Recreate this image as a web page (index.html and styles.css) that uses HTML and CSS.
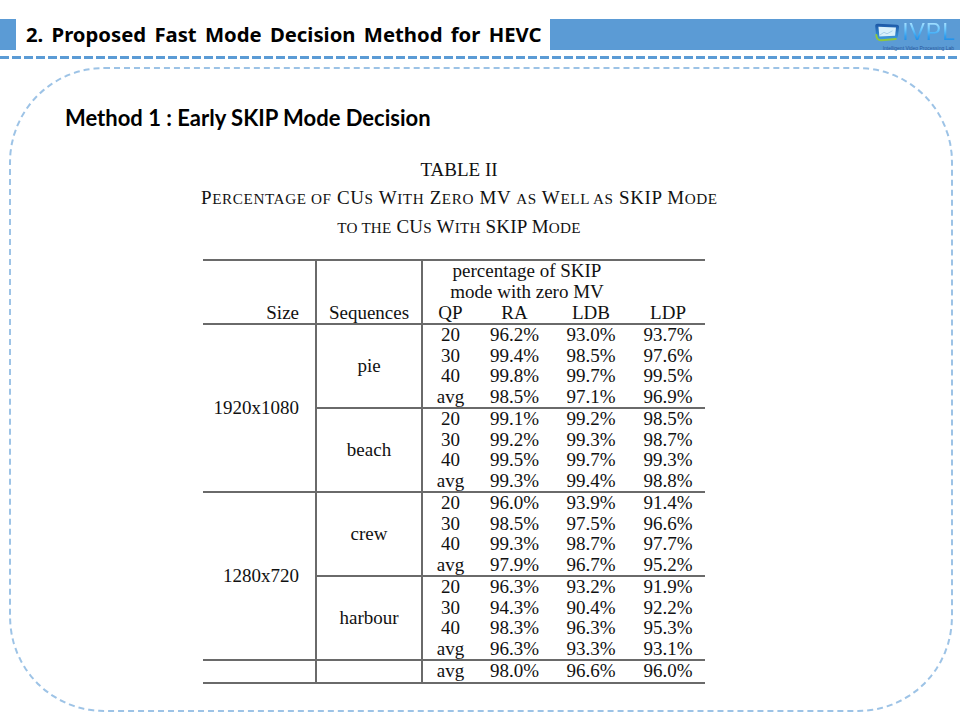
FILE: index.html
```html
<!DOCTYPE html>
<html lang="en">
<head>
<meta charset="utf-8">
<title>Proposed Fast Mode Decision Method for HEVC</title>
<link rel="stylesheet" href="styles.css">
</head>
<body>
<header class="header">
  <div class="hdr-block"></div>
  <h1 class="hdr-title">2. Proposed Fast Mode Decision Method for HEVC</h1>
  <div class="hdr-bar">
    <div class="logo">
      <div class="logo-top">
        <svg class="logo-icon" width="26" height="19" viewBox="0 0 26 19">
          <defs>
            <linearGradient id="scr" x1="0" y1="0" x2="0" y2="1">
              <stop offset="0" stop-color="#1b56a5"/>
              <stop offset="1" stop-color="#3d9be0"/>
            </linearGradient>
          </defs>
          <path d="M1.2 3.2 Q1.2 0.8 3.8 0.8 L22.8 1.8 Q25.3 2 25 4.4 L23.9 13.4 Q23.6 15.8 21 15.8 L5 16.5 Q2.5 16.7 2.3 14.2 Z" fill="url(#scr)"/>
          <path d="M4.4 3.8 L22 4.6 L21.1 12.8 L5.4 13.5 Z" fill="#d9f0fb"/>
          <path d="M6 12 L10 9.3 L13 10.8 L18.5 7.8" stroke="#9cc7e6" stroke-width="0.8" fill="none"/>
          <path d="M2.3 12 Q2.7 17.6 7.5 17.2 L21.8 15.9" stroke="#8dc63f" stroke-width="2" fill="none" stroke-linecap="round"/>
        </svg>
        <span class="logo-text">IVPL</span>
      </div>
      <div class="logo-sub">Intelligent Video Processing Lab</div>
    </div>
  </div>
</header>
<div class="rule"></div>
<main class="frame">
  <h2 class="method">Method 1 : Early SKIP Mode Decision</h2>
  <section class="paper">
    <div class="caption">
      <div class="cap-title">TABLE II</div>
      <div class="cap-line wide">P<span class="sc">ercentage of</span> CU<span class="sc">s</span> W<span class="sc">ith</span> Z<span class="sc">ero</span> MV <span class="sc">as</span> W<span class="sc">ell as</span> SKIP M<span class="sc">ode</span></div>
      <div class="cap-line"><span class="sc">to the</span> CU<span class="sc">s</span> W<span class="sc">ith</span> SKIP M<span class="sc">ode</span></div>
    </div>
    <table class="tbl">
      <colgroup>
        <col class="c-size"><col class="c-seq"><col class="c-qp"><col class="c-ra"><col class="c-ldb"><col class="c-ldp">
      </colgroup>
      <thead>
        <tr>
          <th class="size" rowspan="2">Size</th>
          <th class="seq" rowspan="2">Sequences</th>
          <th class="pct" colspan="3">percentage of SKIP<br>mode with zero MV</th>
          <th></th>
        </tr>
        <tr><th>QP</th><th>RA</th><th>LDB</th><th>LDP</th></tr>
      </thead>
      <tbody>
        <tr class="grp"><td class="size" rowspan="8">1920x1080</td><td class="seq" rowspan="4">pie</td><td>20</td><td>96.2%</td><td>93.0%</td><td>93.7%</td></tr>
        <tr><td>30</td><td>99.4%</td><td>98.5%</td><td>97.6%</td></tr>
        <tr><td>40</td><td>99.8%</td><td>99.7%</td><td>99.5%</td></tr>
        <tr><td>avg</td><td>98.5%</td><td>97.1%</td><td>96.9%</td></tr>
        <tr class="grp"><td class="seq" rowspan="4">beach</td><td>20</td><td>99.1%</td><td>99.2%</td><td>98.5%</td></tr>
        <tr><td>30</td><td>99.2%</td><td>99.3%</td><td>98.7%</td></tr>
        <tr><td>40</td><td>99.5%</td><td>99.7%</td><td>99.3%</td></tr>
        <tr><td>avg</td><td>99.3%</td><td>99.4%</td><td>98.8%</td></tr>
        <tr class="grp"><td class="size" rowspan="8">1280x720</td><td class="seq" rowspan="4">crew</td><td>20</td><td>96.0%</td><td>93.9%</td><td>91.4%</td></tr>
        <tr><td>30</td><td>98.5%</td><td>97.5%</td><td>96.6%</td></tr>
        <tr><td>40</td><td>99.3%</td><td>98.7%</td><td>97.7%</td></tr>
        <tr><td>avg</td><td>97.9%</td><td>96.7%</td><td>95.2%</td></tr>
        <tr class="grp"><td class="seq" rowspan="4">harbour</td><td>20</td><td>96.3%</td><td>93.2%</td><td>91.9%</td></tr>
        <tr><td>30</td><td>94.3%</td><td>90.4%</td><td>92.2%</td></tr>
        <tr><td>40</td><td>98.3%</td><td>96.3%</td><td>95.3%</td></tr>
        <tr><td>avg</td><td>96.3%</td><td>93.3%</td><td>93.1%</td></tr>
        <tr class="grp"><td class="size"></td><td class="seq"></td><td>avg</td><td>98.0%</td><td>96.6%</td><td>96.0%</td></tr>
      </tbody>
    </table>
  </section>
</main>
</body>
</html>
```

FILE: styles.css
```css
* { box-sizing: border-box; margin: 0; padding: 0; }
html, body { width: 960px; height: 720px; background: #fff; overflow: hidden; }
body { font-family: "Liberation Serif", serif; color: #000; }

.header { display: flex; align-items: center; height: 31px; margin-top: 19px; }
.hdr-block { flex: none; width: 16px; height: 31px; background: #5b9bd5; }
.hdr-title {
  flex: none; margin-left: 10px;
  font-family: "Noto Sans", sans-serif; font-weight: 700; font-size: 20.3px;
  line-height: 31px; word-spacing: 3px; white-space: nowrap; color: #000;
}
.hdr-bar {
  flex: 1; height: 31px; margin-left: 8px; background: #5b9bd5;
  display: flex; justify-content: flex-end; align-items: flex-start; padding-right: 4px;
}
.logo { display: flex; flex-direction: column; align-items: flex-end; padding-top: 4px; }
.logo-top { display: flex; align-items: flex-end; gap: 2px; height: 19px; }
.logo-icon { display: block; }
.logo-text {
  display: block;
  font-family: "Liberation Sans", sans-serif; font-size: 23px; line-height: 25px;
  margin: -3px 0 -3px; letter-spacing: 1px;
  background: linear-gradient(180deg, #bfeaff 0%, #6fcaff 35%, #2f9ff0 65%, #1b7dd8 100%);
  -webkit-background-clip: text; background-clip: text; color: transparent;
}
.logo-sub {
  font-family: "Liberation Sans", sans-serif; font-size: 5px; line-height: 5px;
  color: #2a5a9e; margin-top: 3.5px; margin-right: 2px; white-space: nowrap;
}

.rule {
  height: 3px; margin-top: 6px;
  background: repeating-linear-gradient(90deg, #5b9bd5 0 9px, transparent 9px 12px);
}

.frame {
  display: block; margin: 8px 7px 0 9px; height: 645px;
  border: 2px dashed #9dc3e6; border-radius: 95px;
  padding: 35px 0 0 54px;
}
.method {
  font-family: Lato, "Open Sans", sans-serif; font-weight: 700; font-size: 22px;
  line-height: 28px; color: #000;
}

.paper { margin: 24px 0 0 136px; width: 516px; }
.caption { text-align: center; font-size: 19px; line-height: 28px; color: #111; }
.cap-line { white-space: nowrap; letter-spacing: 0.2px; }
.cap-line.wide { letter-spacing: 0.6px; }
.sc { font-size: 0.8em; text-transform: uppercase; }

.tbl {
  margin: 17px 0 0 2px; width: 502px; table-layout: fixed;
  border-collapse: collapse; font-size: 19px; color: #111;
  border-top: 2px solid #6a6a6a; border-bottom: 2px solid #6a6a6a;
}
.c-size { width: 113px; }
.c-seq { width: 106px; }
.c-qp { width: 56px; }
.c-ra { width: 73px; }
.c-ldb { width: 80px; }
.c-ldp { width: 74px; }
.tbl th, .tbl td {
  font-weight: 400; text-align: center; vertical-align: middle;
  line-height: 20.5px; padding: 0; white-space: nowrap;
}
.tbl thead th { vertical-align: bottom; line-height: 20.8px; }
.tbl thead tr:last-child th { border-bottom: 2px solid #6a6a6a; }
.tbl thead th.size, .tbl thead th.seq { border-bottom: 2px solid #6a6a6a; }
.tbl .size { text-align: right; padding-right: 16px; border-right: 2px solid #6a6a6a; }
.tbl .seq { border-right: 2px solid #6a6a6a; }
.tbl tr.grp td { border-top: 2px solid #6a6a6a; }
```
